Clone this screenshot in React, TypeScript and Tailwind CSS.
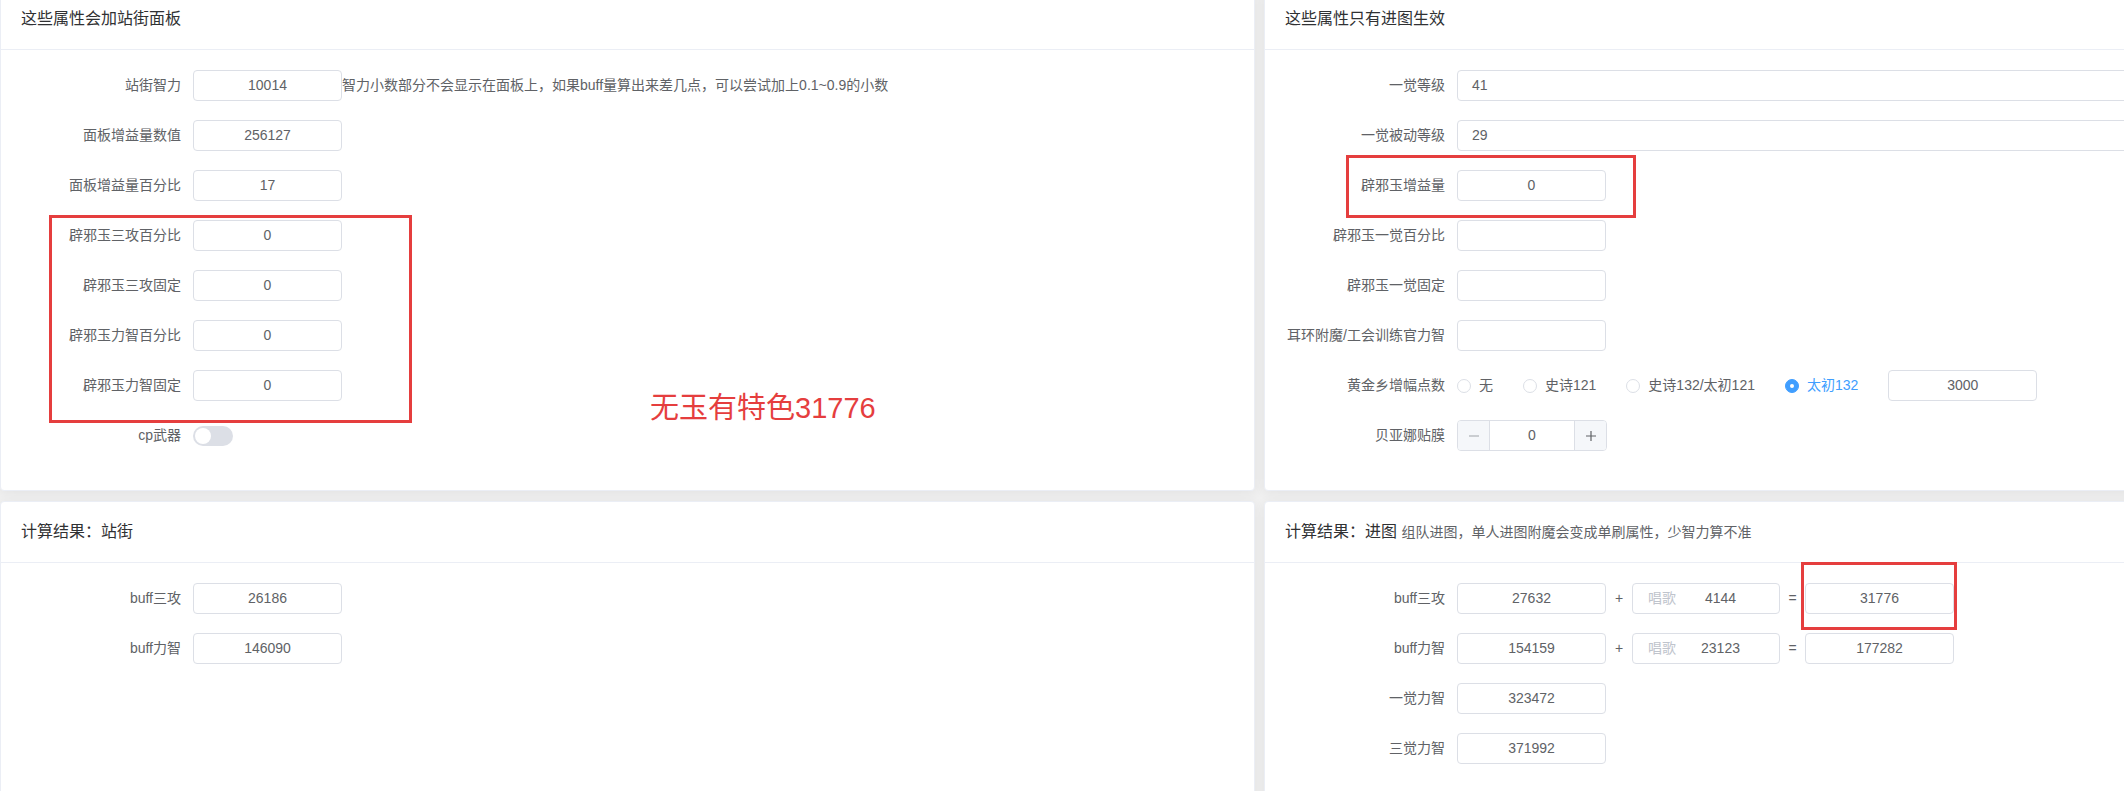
import type { ReactNode } from "react";

const FONT = "font-['Liberation_Sans','Noto_Sans_CJK_SC',sans-serif]";

function Card({ title, children, overlay }: { title: ReactNode; children: ReactNode; overlay?: ReactNode }) {
  return (
    <div className="relative bg-white border border-[#ebeef5] rounded-[4px] shadow-[0_2px_12px_0_rgba(0,0,0,0.06)]">
      <div className="px-5 py-[18px] border-b border-[#ebeef5] text-[16px] leading-[24px] text-[#303133]">{title}</div>
      <div className="p-5">{children}</div>
      {overlay}
    </div>
  );
}

function Row({ label, children }: { label: string; children: ReactNode }) {
  return (
    <div className="flex items-center h-[31px] mb-[19px]">
      <div className="w-[172px] shrink-0 pr-3 text-right text-[14px] text-[#606266] whitespace-nowrap">{label}</div>
      {children}
    </div>
  );
}

function Box({ value = "", wide = false }: { value?: string; wide?: boolean }) {
  return (
    <div
      className={
        wide
          ? "flex-1 h-[31px] border border-[#dcdfe6] rounded-[4px] flex items-center px-[14px] text-[14px] text-[#606266]"
          : "w-[149px] shrink-0 h-[31px] border border-[#dcdfe6] rounded-[4px] flex items-center justify-center text-[14px] text-[#606266]"
      }
    >
      {value}
    </div>
  );
}

function SongBox({ value }: { value: string }) {
  return (
    <div className="w-[148px] shrink-0 h-[31px] border border-[#dcdfe6] rounded-[4px] flex items-center text-[14px]">
      <span className="pl-[15px] w-[44px] shrink-0 text-[#c0c4cc]">唱歌</span>
      <span className="flex-1 text-center pr-[15px] text-[#606266]">{value}</span>
    </div>
  );
}

function Radio({ label, checked = false }: { label: string; checked?: boolean }) {
  return (
    <div className="flex items-center mr-[30px]">
      {checked ? (
        <span className="w-[14px] h-[14px] rounded-full bg-[#409eff] border border-[#409eff] flex items-center justify-center">
          <span className="w-[4px] h-[4px] rounded-full bg-white" />
        </span>
      ) : (
        <span className="w-[14px] h-[14px] rounded-full border border-[#dcdfe6] bg-white" />
      )}
      <span className={checked ? "pl-[8px] text-[14px] text-[#409eff]" : "pl-[8px] text-[14px] text-[#606266]"}>{label}</span>
    </div>
  );
}

function Stepper() {
  return (
    <div className="w-[150px] h-[31px] border border-[#dcdfe6] rounded-[4px] flex text-[14px] text-[#606266] overflow-hidden">
      <div className="w-[32px] bg-[#f5f7fa] border-r border-[#dcdfe6] flex items-center justify-center">
        <svg width="12" height="12" viewBox="0 0 12 12">
          <path d="M1 6h10" stroke="#a0a3a8" strokeWidth="1.2" />
        </svg>
      </div>
      <div className="flex-1 flex items-center justify-center">0</div>
      <div className="w-[32px] bg-[#f5f7fa] border-l border-[#dcdfe6] flex items-center justify-center">
        <svg width="12" height="12" viewBox="0 0 12 12">
          <path d="M1 6h10M6 1v10" stroke="#606266" strokeWidth="1.2" />
        </svg>
      </div>
    </div>
  );
}

const RED = "absolute border-[3px] border-[#e53e3e] pointer-events-none";

export default function App() {
  return (
    <div className={`w-[2124px] h-[791px] overflow-hidden bg-[#f0f0f0] ${FONT}`}>
      <div className="-mt-[12px] grid grid-cols-[1255px_1255px] gap-x-[9px] gap-y-[10px]">
        <Card
          title="这些属性会加站街面板"
          overlay={
            <>
              <div className={`${RED} left-[48px] top-[226px] w-[363px] h-[208px]`} />
              <div className="absolute left-[649px] top-[399px] text-[29px] leading-[40px] text-[#e53e3e] whitespace-nowrap">
                无玉有特色31776
              </div>
            </>
          }
        >
          <Row label="站街智力">
            <Box value="10014" />
            <span className="text-[14px] text-[#606266] whitespace-nowrap">
              智力小数部分不会显示在面板上，如果buff量算出来差几点，可以尝试加上0.1~0.9的小数
            </span>
          </Row>
          <Row label="面板增益量数值">
            <Box value="256127" />
          </Row>
          <Row label="面板增益量百分比">
            <Box value="17" />
          </Row>
          <Row label="辟邪玉三攻百分比">
            <Box value="0" />
          </Row>
          <Row label="辟邪玉三攻固定">
            <Box value="0" />
          </Row>
          <Row label="辟邪玉力智百分比">
            <Box value="0" />
          </Row>
          <Row label="辟邪玉力智固定">
            <Box value="0" />
          </Row>
          <Row label="cp武器">
            <div className="w-[40px] h-[20px] rounded-full bg-[#dcdfe6] p-[2px] flex items-center">
              <span className="w-[16px] h-[16px] rounded-full bg-white" />
            </div>
          </Row>
        </Card>

        <Card
          title="这些属性只有进图生效"
          overlay={<div className={`${RED} left-[81px] top-[166px] w-[290px] h-[63px]`} />}
        >
          <Row label="一觉等级">
            <Box value="41" wide />
          </Row>
          <Row label="一觉被动等级">
            <Box value="29" wide />
          </Row>
          <Row label="辟邪玉增益量">
            <Box value="0" />
          </Row>
          <Row label="辟邪玉一觉百分比">
            <Box />
          </Row>
          <Row label="辟邪玉一觉固定">
            <Box />
          </Row>
          <Row label="耳环附魔/工会训练官力智">
            <Box />
          </Row>
          <Row label="黄金乡增幅点数">
            <Radio label="无" />
            <Radio label="史诗121" />
            <Radio label="史诗132/太初121" />
            <Radio label="太初132" checked />
            <Box value="3000" />
          </Row>
          <Row label="贝亚娜贴膜">
            <Stepper />
          </Row>
        </Card>

        <Card title="计算结果：站街">
          <Row label="buff三攻">
            <Box value="26186" />
          </Row>
          <Row label="buff力智">
            <Box value="146090" />
          </Row>
          <div className="h-[140px]" />
        </Card>

        <Card
          title={
            <>
              计算结果：进图 <span className="text-[14px] text-[#606266]">组队进图，单人进图附魔会变成单刷属性，少智力算不准</span>
            </>
          }
          overlay={<div className={`${RED} left-[536px] top-[60px] w-[156px] h-[68px]`} />}
        >
          <Row label="buff三攻">
            <Box value="27632" />
            <span className="w-[26px] text-center text-[14px] text-[#606266]">+</span>
            <SongBox value="4144" />
            <span className="w-[25px] text-center text-[14px] text-[#606266]">=</span>
            <Box value="31776" />
          </Row>
          <Row label="buff力智">
            <Box value="154159" />
            <span className="w-[26px] text-center text-[14px] text-[#606266]">+</span>
            <SongBox value="23123" />
            <span className="w-[25px] text-center text-[14px] text-[#606266]">=</span>
            <Box value="177282" />
          </Row>
          <Row label="一觉力智">
            <Box value="323472" />
          </Row>
          <Row label="三觉力智">
            <Box value="371992" />
          </Row>
        </Card>
      </div>
    </div>
  );
}
